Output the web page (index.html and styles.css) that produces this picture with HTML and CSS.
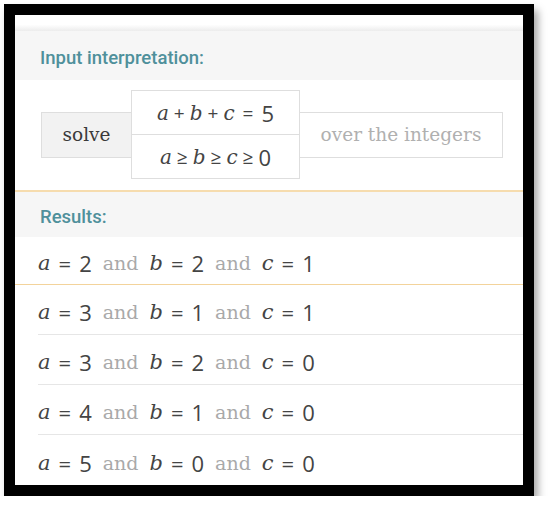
FILE: index.html
```html
<!DOCTYPE html>
<html>
<head>
<meta charset="utf-8">
<link rel="stylesheet" href="styles.css">
</head>
<body>
<div class="frame">
  <div class="topgap"></div>
  <section class="pod">
    <div class="pod-title">Input interpretation:</div>
    <div class="input-area">
      <div class="interp">
        <div class="cell solve">solve</div>
        <div class="stack">
          <div class="cell eq"><span class="v">a</span><span class="op">+</span><span class="v">b</span><span class="op">+</span><span class="v">c</span><span class="op eqs">=</span><span class="n">5</span></div>
          <div class="cell eq"><span class="v">a</span><span class="op">≥</span><span class="v">b</span><span class="op">≥</span><span class="v">c</span><span class="op">≥</span><span class="n">0</span></div>
        </div>
        <div class="cell over">over the integers</div>
      </div>
    </div>
  </section>
  <section class="pod results">
    <div class="pod-title">Results:</div>
    <div class="row first"><span class="v">a</span><span class="op">=</span><span class="n">2</span><span class="and">and</span><span class="v">b</span><span class="op">=</span><span class="n">2</span><span class="and">and</span><span class="v">c</span><span class="op">=</span><span class="n">1</span></div>
    <div class="row"><span class="v">a</span><span class="op">=</span><span class="n">3</span><span class="and">and</span><span class="v">b</span><span class="op">=</span><span class="n">1</span><span class="and">and</span><span class="v">c</span><span class="op">=</span><span class="n">1</span></div>
    <div class="row"><span class="v">a</span><span class="op">=</span><span class="n">3</span><span class="and">and</span><span class="v">b</span><span class="op">=</span><span class="n">2</span><span class="and">and</span><span class="v">c</span><span class="op">=</span><span class="n">0</span></div>
    <div class="row"><span class="v">a</span><span class="op">=</span><span class="n">4</span><span class="and">and</span><span class="v">b</span><span class="op">=</span><span class="n">1</span><span class="and">and</span><span class="v">c</span><span class="op">=</span><span class="n">0</span></div>
    <div class="row last"><span class="v">a</span><span class="op">=</span><span class="n">5</span><span class="and">and</span><span class="v">b</span><span class="op">=</span><span class="n">0</span><span class="and">and</span><span class="v">c</span><span class="op">=</span><span class="n">0</span></div>
  </section>
</div>
</body>
</html>
```

FILE: styles.css
```css
html, body {
  margin: 0;
  padding: 0;
  background: #ffffff;
}

.frame {
  margin: 4px 0 0 4px;
  width: 508px;
  height: 470px;
  border: 11px solid #000;
  background: #fff;
  box-shadow: 4px 6px 8px rgba(0, 0, 0, 0.35);
  overflow: hidden;
  display: flex;
  flex-direction: column;
}

.topgap {
  height: 18px;
  background: linear-gradient(#ffffff 60%, #ececec);
}

.pod-title {
  background: #f6f6f6;
  color: #4f909b;
  font-family: Roboto, "Liberation Sans", sans-serif;
  font-size: 18.5px;
  font-weight: 500;
  padding-left: 25px;
  display: flex;
  align-items: center;
  box-sizing: border-box;
}

.pod > .pod-title {
  height: 49px;
  padding-top: 4px;
}

.input-area {
  padding: 10px 0 11px 26px;
  border-bottom: 2px solid #f6dcae;
}

.interp {
  display: flex;
  align-items: center;
}

.cell {
  display: flex;
  align-items: center;
  justify-content: center;
  box-sizing: border-box;
  border: 1px solid #dedede;
  font-family: "DejaVu Serif", serif;
  font-size: 18.5px;
}

.solve {
  width: 91px;
  height: 46px;
  background: #f2f2f2;
  color: #3a3a3a;
}

.stack {
  display: flex;
  flex-direction: column;
  margin-left: -1px;
}

.stack .eq {
  width: 169px;
  height: 45px;
  color: #444;
}

.stack .eq + .eq {
  margin-top: -1px;
}

.over {
  width: 204px;
  height: 46px;
  margin-left: -1px;
  color: #b0b0b0;
}

.results > .pod-title {
  height: 45px;
}

.v {
  font-family: "DejaVu Serif", serif;
  font-style: italic;
  color: #444;
}

.op, .n {
  font-family: "Open Sans", "DejaVu Sans", sans-serif;
  color: #444;
}

.eq .v {
  font-size: 20px;
}

.eq .op {
  margin: 0 5px;
  font-size: 19px;
}

.eq .op.eqs {
  margin: 0 8px;
}

.eq .n {
  font-size: 22px;
}

.row {
  height: 50px;
  box-sizing: border-box;
  margin-left: 23px;
  border-bottom: 1px solid #e6e6e6;
  display: flex;
  align-items: center;
  padding-top: 5px;
}

.row.first {
  height: 48px;
  margin-left: 0;
  padding-left: 23px;
  border-bottom: 1px solid #f3d39b;
}

.row.last {
  border-bottom: none;
}

.row .v {
  font-size: 21px;
}

.row .op {
  margin: 0 8px;
  font-size: 22px;
}

.row .n {
  font-size: 22px;
}

.and {
  font-family: "DejaVu Serif", serif;
  font-size: 19px;
  color: #a9a9a9;
  margin: 0 11px;
}
```
